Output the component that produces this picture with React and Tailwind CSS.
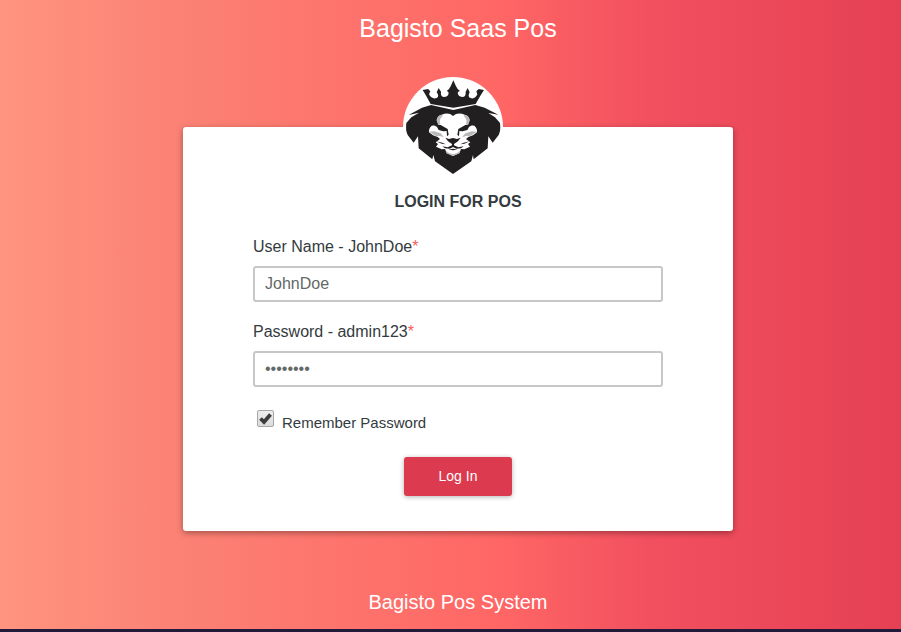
import { useState } from 'react';

function LionLogo() {
  return (
    <svg viewBox="0 0 360 360" className="size-[120px]" role="img" aria-label="Lion logo">
      <circle cx="180" cy="180" r="150" fill="#fff" />
      <g fill="#221f20">
        <path d="M89 69L105 66L112 73L108 82Q115 96 128 94Q139 91 134 80L131 76L137 63L144 74Q142 88 152 90Q166 90 167 77Q165 72 161 72Q170 66 173 58L181 40L189 58Q192 66 201 72Q196 72 194 77Q196 90 210 90Q219 88 218 74L224 63L230 76L228 80Q224 91 235 94Q247 96 253 82L250 73L257 66L273 69L263 85L248 111L181 122L113 111L98 84Z" />
        <path d="M114 114L181 129L247 114L275 122L316 143L286 138L306 151L321 168Q324 190 317 204L299 227L286 208L284 244L242 277L240 264L235 283L180 321L126 283L121 264L118 277L77 244L75 208L62 227L44 204Q37 190 40 168L55 151L78 137L47 144L87 122Z" />
      </g>
      {/* face */}
      <g fill="#fff">
        <path d="M131 160Q132 147 146 143Q167 135 180 147Q194 135 215 143Q229 147 230 160L225 173L244 176Q254 185 252 196L240 205L226 210L219 216L232 226L225 231L231 239L214 247L204 246L199 259L180 267L161 259L156 246L146 247L129 239L135 231L128 226L141 216L134 210L120 205L108 196Q106 185 116 176L136 173Z" />
      </g>
      {/* shading */}
      <g fill="#b9b9b9">
        <path d="M131 160Q132 147 146 143L149 146Q137 157 142 171L136 173Z" />
        <path d="M230 160Q229 147 215 143L212 146Q224 157 219 171L225 173Z" />
        <path d="M108 194L124 193L143 199L153 211L141 207L130 208Z" />
        <path d="M252 194L236 193L217 199L207 211L219 207L230 208Z" />
        <path d="M158 251L168 258L180 262L192 258L202 251L199 259L180 267L161 259Z" />
      </g>
      {/* eyes, nose and mouth */}
      <g fill="#221f20">
        <path d="M119 172L143 174L164 186L167 203L162 208L161 192L151 193L137 189L132 180Z" />
        <path d="M241 172L217 174L196 186L193 203L198 208L199 192L209 193L223 189L228 180Z" />
        <path d="M157 212L168 216L180 213L192 216L203 212L195 223L183 231L183 235L196 241L212 238L204 244L190 245L180 240L170 245L156 244L148 238L164 241L177 235L177 231L165 223Z" />
        <path d="M130 223L148 227L158 232L146 230ZM230 223L212 227L202 232L214 230Z" />
        <path d="M167 248L180 245L193 248L180 250Z" />
      </g>
    </svg>
  );
}

function Field({ id, label, ...rest }) {
  return (
    <div className="flex flex-col gap-[7px]">
      <label htmlFor={id} className="text-base leading-6">
        {label}
        <span className="text-[#fc5b5b]">*</span>
      </label>
      <input
        id={id}
        className="h-9 w-full rounded-[3px] border-2 border-[#c7c7c7] bg-white px-[10px] text-base text-[#636966] outline-none focus:border-[#e74155]"
        {...rest}
      />
    </div>
  );
}

function RememberCheckbox() {
  const [checked, setChecked] = useState(true);

  return (
    <div className="flex gap-2 pl-1">
      <span className="relative size-[17px]">
        <input
          id="remember"
          type="checkbox"
          checked={checked}
          onChange={(e) => setChecked(e.target.checked)}
          className="block size-[17px] appearance-none rounded-[2px] border border-[#a6a6a6] bg-linear-to-b from-[#eeeeee] to-[#dcdcdc]"
        />
        {checked && (
          <svg viewBox="0 0 17 17" className="pointer-events-none absolute inset-0 size-[17px]">
            <path d="M3.500 8.500L7 12L13.500 4.500" fill="none" stroke="#3c3c3c" strokeWidth="3.800" />
          </svg>
        )}
      </span>
      <label htmlFor="remember" className="pt-[3px] text-[15px] leading-5">
        Remember Password
      </label>
    </div>
  );
}

function LoginCard() {
  return (
    <form
      onSubmit={(e) => e.preventDefault()}
      className="flex w-full max-w-[550px] flex-col items-center rounded-[3px] bg-white px-[70px] pb-[35px] text-[#333b3e] shadow-[0_2px_6px_rgba(0,0,0,0.35)]"
    >
      <div className="-mt-[60px] pr-[10px]">
        <LionLogo />
      </div>
      <h2 className="mt-[3px] text-base leading-6 font-bold">LOGIN FOR POS</h2>
      <div className="mt-[21px] flex w-full flex-col gap-[18px]">
        <Field id="username" label="User Name - JohnDoe" type="text" defaultValue="JohnDoe" />
        <Field id="password" label="Password - admin123" type="password" defaultValue="admin123" />
      </div>
      <div className="mt-[23px] w-full">
        <RememberCheckbox />
      </div>
      <button
        type="submit"
        className="mt-6 rounded-[3px] bg-[#dc3a4f] px-[35px] pt-[9px] pb-[10px] text-sm leading-5 text-white shadow-[0_1px_5px_rgba(0,0,0,0.3)]"
      >
        Log In
      </button>
    </form>
  );
}

export default function App() {
  return (
    <div className="flex h-screen flex-col font-['Liberation_Sans',Arial,sans-serif]">
      <main className="flex min-h-0 flex-1 flex-col items-center overflow-hidden bg-[linear-gradient(90deg,#ff947f_0%,#fb8376_18%,#ff6765_55%,#f2505f_72%,#e54054_100%)] pl-[15px]">
        <h1 className="pt-[10px] text-[25px] leading-9 text-white">Bagisto Saas Pos</h1>
        <div className="mt-[81px] flex w-full justify-center">
          <LoginCard />
        </div>
        <footer className="mt-[58px] text-center text-white">
          <p className="text-xl leading-[26px]">Bagisto Pos System</p>
          <p className="mt-[10px] text-sm leading-5">Version 1.0.1</p>
        </footer>
      </main>
      <div className="h-[3px] shrink-0 bg-[#211a3a]" />
    </div>
  );
}
